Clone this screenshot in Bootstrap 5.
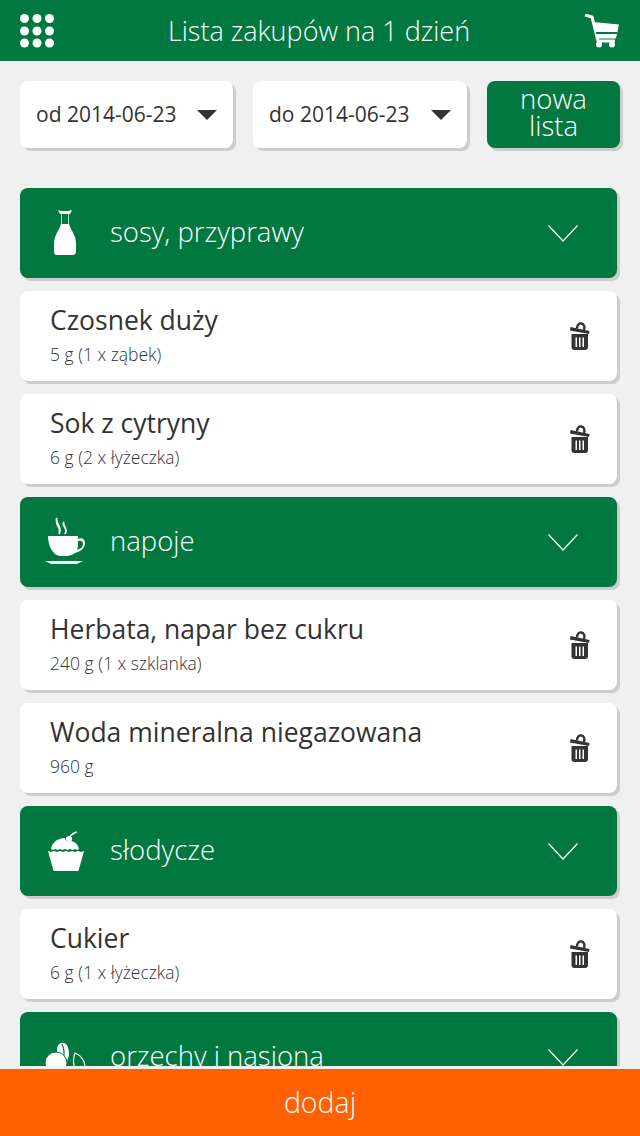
<!DOCTYPE html>
<html lang="pl">

<head>
    <title>Lista zakupów</title>
    <meta charset="utf-8">
    <meta name="viewport" content="width=device-width, initial-scale=1">
    <link href="https://cdn.jsdelivr.net/npm/bootstrap@5.3.3/dist/css/bootstrap.min.css" rel="stylesheet">
    <script src="https://cdn.jsdelivr.net/npm/bootstrap@5.3.3/dist/js/bootstrap.bundle.min.js"></script>
    <style>
        html,
        body {
            height: 1136px;
            overflow: hidden;
        }

        body {
            background: #f0f0f0;
            color: #333;
            font-family: "Open Sans", "Noto Sans", sans-serif;
        }

        .app-shell {
            height: 1136px;
        }

        .top-bar {
            height: 61px;
            padding: 0 20px;
            background: #00783f;
            color: #fff;
            flex: none;
        }

        .top-title {
            font-size: 27px;
            font-weight: 350;
            line-height: 61px;
        }

        .list-area {
            height: 1005px;
            flex: none;
            padding: 20px 20px 0;
            overflow: hidden;
        }

        .tile {
            border: 0;
            border-radius: 8px;
            box-shadow: 3px 3px 0 #cdcdcd;
        }

        .date-row {
            height: 67px;
            margin-bottom: 40px;
            gap: 20px;
        }

        .date-box {
            width: 213px;
            padding: 0 16px;
            background: #fff;
            font-size: 21px;
        }

        .date-box + .date-box {
            width: 214px;
        }

        .new-list {
            width: 133px;
            padding: 0 0 6px;
            background: #00783f;
            color: #fff;
            font-size: 27.5px;
            font-weight: 350;
            line-height: 27px;
        }

        .group-head {
            width: 597px;
            height: 90px;
            margin-bottom: 13px;
            background: #00783f;
            color: #fff;
            font-size: 27.5px;
            font-weight: 350;
        }

        .group-label {
            padding-bottom: 2px;
        }

        .group-icon {
            width: 90px;
            height: 90px;
            flex: none;
        }

        .chevron-icon {
            margin-right: 39px;
        }

        .product {
            width: 597px;
            height: 90px;
            margin-bottom: 13px;
            padding: 0 27px 0 30px;
            background: #fff;
        }

        .product-name {
            font-size: 26.5px;
            line-height: 36px;
        }

        .product-qty {
            font-size: 17.5px;
            font-weight: 350;
            line-height: 32px;
        }

        .bottom-bar {
            height: 67px;
            margin-top: 3px;
            padding-bottom: 1px;
            flex: none;
            background: #ff6000;
            color: #fff;
            font-size: 28.5px;
            font-weight: 350;
        }
    </style>
</head>

<body>

    <svg width="0" height="0" class="d-block">
        <symbol id="trash" viewBox="0 0 20 28">
            <path d="M.5 5 19.500 9 19 12 0 8.500z" fill="#333" />
            <path d="M7 6.500C7 3 9 1 11.500 1.500S15 4.500 14 8" fill="none" stroke="#333" stroke-width="2.400" />
            <path d="M1.500 12h16.500v13a3 3 0 0 1-3 3H4.500a3 3 0 0 1-3-3z" fill="#333" />
            <path d="M5.500 15.500h1.500V25H5.500zM9 15.500h1.500V25H9zM12.500 15.500H14V25h-1.500z" fill="#fff" />
        </symbol>
        <symbol id="chevron" viewBox="0 0 30 17">
            <path d="M.5.500 15 16 29.500.500" fill="none" stroke="#fff" stroke-width="1.200" />
        </symbol>
        <symbol id="caret" viewBox="0 0 20 10">
            <path d="M0 0h20L10 10z" fill="#333" />
        </symbol>
    </svg>

    <div class="app-shell d-flex flex-column">

        <!-- Header -->
        <header class="top-bar d-flex align-items-center justify-content-between">
            <svg width="34" height="34" viewBox="0 0 34 34" fill="#fff">
                <circle cx="4.500" cy="4.500" r="4.500" />
                <circle cx="17" cy="4.500" r="4.500" />
                <circle cx="29.500" cy="4.500" r="4.500" />
                <circle cx="4.500" cy="17" r="4.500" />
                <circle cx="17" cy="17" r="4.500" />
                <circle cx="29.500" cy="17" r="4.500" />
                <circle cx="4.500" cy="29" r="4.500" />
                <circle cx="17" cy="29" r="4.500" />
                <circle cx="29.500" cy="29" r="4.500" />
            </svg>
            <div class="top-title">Lista zakupów na 1 dzień</div>
            <svg width="36" height="34" viewBox="0 0 36 34">
                <path d="M1 1 8 3 14 27h17" fill="none" stroke="#fff" stroke-width="3" />
                <path d="M9 8l26 2.500-3 14H13z" fill="#fff" />
                <path d="M12 18h21v2H12z" fill="#00783f" />
                <circle cx="15" cy="30.500" r="3" fill="#fff" />
                <circle cx="28" cy="30.500" r="3" fill="#fff" />
            </svg>
        </header>

        <main class="list-area">

            <!-- Date filter -->
            <div class="date-row d-flex">
                <div class="tile date-box d-flex align-items-center justify-content-between">
                    <span>od 2014-06-23</span>
                    <svg width="20" height="10">
                        <use href="#caret" />
                    </svg>
                </div>
                <div class="tile date-box d-flex align-items-center justify-content-between">
                    <span>do 2014-06-23</span>
                    <svg width="20" height="10">
                        <use href="#caret" />
                    </svg>
                </div>
                <button type="button" class="btn tile new-list">nowa<br>lista</button>
            </div>

            <!-- sosy -->
            <div class="tile group-head d-flex align-items-center">
                <svg class="group-icon" viewBox="0 0 90 90" fill="#fff">
                    <path d="M38 22l3 1h7l4-1-2 4H40z" />
                    <path d="M41.500 26v11M48.500 26v11" fill="none" stroke="#fff" stroke-opacity=".7" />
                    <path d="M41 36h8c2 7 7 11 7 20v8c0 2-2 3-3 3H37c-2 0-3-1-3-3v-8c0-9 5-13 7-20z" />
                </svg>
                <span class="group-label flex-grow-1">sosy, przyprawy</span>
                <svg class="chevron-icon" width="30" height="17">
                    <use href="#chevron" />
                </svg>
            </div>

            <div class="tile product d-flex align-items-center justify-content-between">
                <div>
                    <div class="product-name">Czosnek duży</div>
                    <div class="product-qty">5 g (1 x ząbek)</div>
                </div>
                <svg width="20" height="28">
                    <use href="#trash" />
                </svg>
            </div>
            <div class="tile product d-flex align-items-center justify-content-between">
                <div>
                    <div class="product-name">Sok z cytryny</div>
                    <div class="product-qty">6 g (2 x łyżeczka)</div>
                </div>
                <svg width="20" height="28">
                    <use href="#trash" />
                </svg>
            </div>

            <!-- napoje -->
            <div class="tile group-head d-flex align-items-center">
                <svg class="group-icon" viewBox="0 0 90 90" fill="#fff">
                    <path d="M37 21c-3 5 6 8 2 16M37 23c-2 5 5 8 2 14M44 25c-3 4 5 6 1 12" fill="none" stroke="#fff" stroke-width="1.800" />
                    <path d="M28 39h30v3c3-2 7 0 7 4 0 6-6 9-10 10-2 2-6 3-9 3h-6c-8-1-12-11-12-20z" />
                    <path d="M58 44c3-1 5 0 5 3s-3 5-6 6c1-3 1-6 1-9z" fill="#00783f" />
                    <path d="M25 64h38l-4 2c-2 1-3 1-5 1H34c-2 0-3 0-5-1z" />
                </svg>
                <span class="group-label flex-grow-1">napoje</span>
                <svg class="chevron-icon" width="30" height="17">
                    <use href="#chevron" />
                </svg>
            </div>

            <div class="tile product d-flex align-items-center justify-content-between">
                <div>
                    <div class="product-name">Herbata, napar bez cukru</div>
                    <div class="product-qty">240 g (1 x szklanka)</div>
                </div>
                <svg width="20" height="28">
                    <use href="#trash" />
                </svg>
            </div>
            <div class="tile product d-flex align-items-center justify-content-between">
                <div>
                    <div class="product-name">Woda mineralna niegazowana</div>
                    <div class="product-qty">960 g</div>
                </div>
                <svg width="20" height="28">
                    <use href="#trash" />
                </svg>
            </div>

            <!-- slodycze -->
            <div class="tile group-head d-flex align-items-center">
                <svg class="group-icon" viewBox="0 0 90 90" fill="#fff">
                    <path d="M49 32c2-3 4-5 8-6" fill="none" stroke="#fff" stroke-width="1.500" />
                    <circle cx="49" cy="33" r="3" />
                    <path d="M31 43c1-6 6-11 14-11 0 3 3 5 6 3 5 1 7 4 8 8l-2 1-2-1-2 1-3-1-2 1-3-1-3 1-2-1-3 1-2-1-2 1z" />
                    <path d="M28 45l3 1 3-1 3 1 3-1 3 1 3-1 3 1 3-1 3 1 3-1 3 1 3-1-5 18c0 2-1 2-3 2H36c-2 0-3 0-3-2z" />
                </svg>
                <span class="group-label flex-grow-1">słodycze</span>
                <svg class="chevron-icon" width="30" height="17">
                    <use href="#chevron" />
                </svg>
            </div>

            <div class="tile product d-flex align-items-center justify-content-between">
                <div>
                    <div class="product-name">Cukier</div>
                    <div class="product-qty">6 g (1 x łyżeczka)</div>
                </div>
                <svg width="20" height="28">
                    <use href="#trash" />
                </svg>
            </div>

            <!-- orzechy -->
            <div class="tile group-head d-flex align-items-center">
                <svg class="group-icon" viewBox="0 0 90 90" fill="#fff">
                    <path d="M37 36c1-4 4-6 7-5 4 1 5 6 5 12l-3 10-9-6z" />
                    <path d="M42 32c2 4 3 10 1 18" fill="none" stroke="#00783f" stroke-width="1.200" />
                    <path d="M55 41c5 2 10 7 10 14s-4 8-7 6c-4-3-6-13-3-20z" fill="none" stroke="#fff" stroke-width="1.200" />
                    <ellipse cx="36" cy="51" rx="11" ry="11" stroke="#00783f" />
                </svg>
                <span class="group-label flex-grow-1">orzechy i nasiona</span>
                <svg class="chevron-icon" width="30" height="17">
                    <use href="#chevron" />
                </svg>
            </div>

        </main>

        <footer class="bottom-bar d-flex align-items-center justify-content-center">dodaj</footer>

    </div>

</body>

</html>
